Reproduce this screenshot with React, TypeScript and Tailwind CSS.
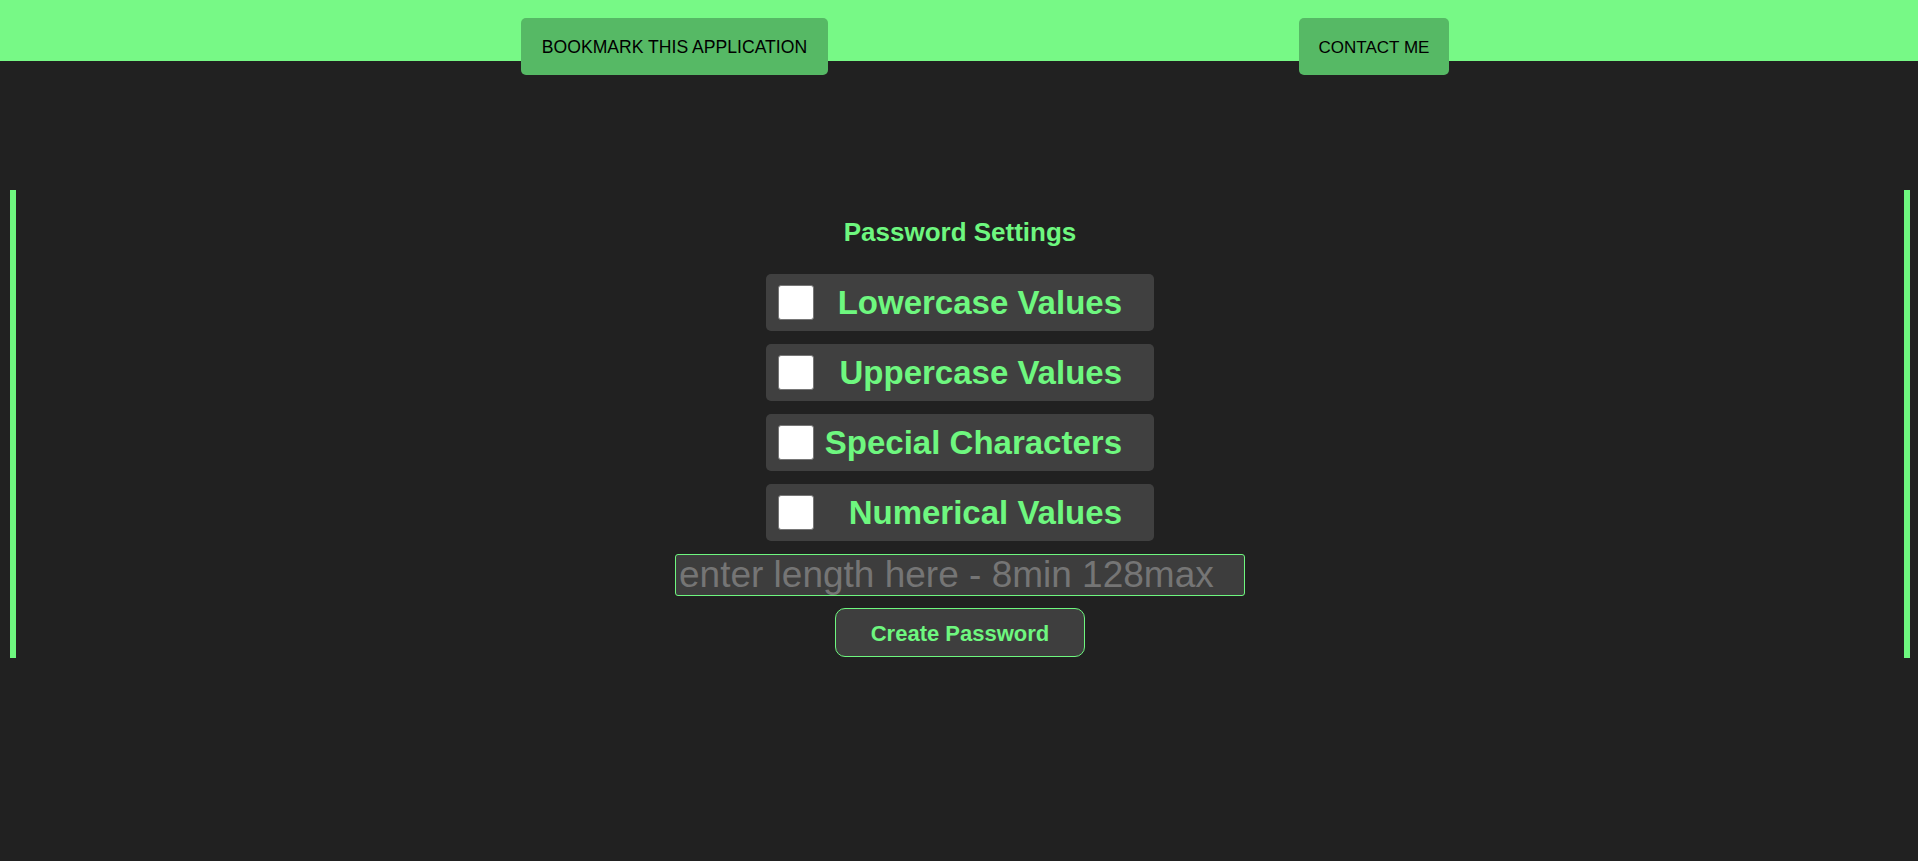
import { useState } from 'react';

const options = [
  { id: 'lower', label: 'Lowercase Values' },
  { id: 'upper', label: 'Uppercase Values' },
  { id: 'special', label: 'Special Characters' },
  { id: 'number', label: 'Numerical Values' },
];

export default function App() {
  const [checked, setChecked] = useState<Record<string, boolean>>({});
  const [length, setLength] = useState('');

  return (
    <div className="min-h-screen bg-[#212121] font-['Liberation_Sans',Arial,sans-serif]">
      {/* Top bar */}
      <header className="h-[61px] bg-[#77f986] flex items-start pt-[18px] pl-[521px] gap-[471px]">
        <button className="w-[307px] h-[57px] pt-[2px] rounded-[5px] bg-[#56b965] text-black text-[17.6px] whitespace-nowrap">
          BOOKMARK THIS APPLICATION
        </button>
        <button className="w-[150px] h-[57px] pt-[2px] rounded-[5px] bg-[#56b965] text-black text-[17px] whitespace-nowrap">
          CONTACT ME
        </button>
      </header>

      {/* Settings panel */}
      <main className="mt-[129px] ml-[10px] w-[1900px] h-[468px] border-x-[6px] border-[#6ef77f] flex flex-col items-center pt-[27px]">
        <h2 className="text-[26px] font-bold text-[#6ef77f] leading-[30px]">Password Settings</h2>

        <div className="mt-[27px] flex flex-col gap-[13px]">
          {options.map((opt) => (
            <label
              key={opt.id}
              className="w-[388px] h-[57px] rounded-[5px] bg-[#404040] flex items-center pl-[12px] pr-[32px] cursor-pointer"
            >
              <input
                type="checkbox"
                checked={!!checked[opt.id]}
                onChange={(e) => setChecked((prev) => ({ ...prev, [opt.id]: e.target.checked }))}
                className="appearance-none w-[36px] h-[35px] bg-white border border-[#767676] rounded-[3px] shrink-0 checked:bg-[#56b965]"
              />
              <span className="flex-1 text-right text-[33px] font-bold text-[#6ef77f] whitespace-nowrap">
                {opt.label}
              </span>
            </label>
          ))}
        </div>

        <input
          type="number"
          value={length}
          onChange={(e) => setLength(e.target.value)}
          placeholder="enter length here - 8min 128max"
          className="mt-[13px] w-[570px] h-[42px] bg-[#3d3d3d] border border-[#6ef77f] rounded-[3px] px-[3px] text-[37px] text-[#d0d0d0] placeholder:text-[#757575] outline-none"
        />

        <button className="mt-[12px] w-[250px] h-[49px] pt-[2px] rounded-[10px] bg-[#3e3e3e] border border-[#6ef77f] text-[22px] font-bold text-[#6ef77f]">
          Create Password
        </button>
      </main>
    </div>
  );
}
